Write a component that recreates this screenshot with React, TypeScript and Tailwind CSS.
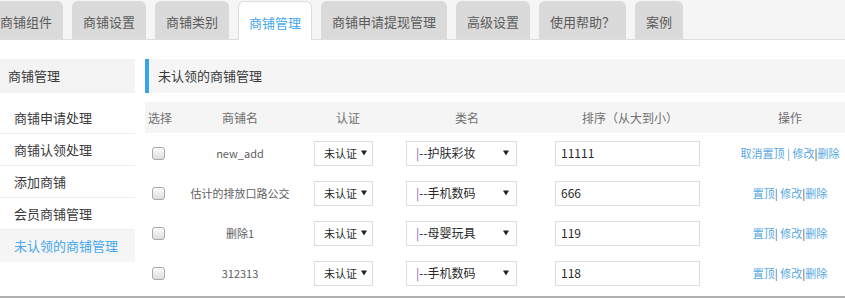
import React from "react";

const tabs = ["商铺组件", "商铺设置", "商铺类别", "商铺管理", "商铺申请提现管理", "高级设置", "使用帮助？", "案例"];
const menu = ["商铺申请处理", "商铺认领处理", "添加商铺", "会员商铺管理", "未认领的商铺管理"];

const rows = [
  { name: "new_add", cat: "护肤彩妆", sort: "11111", top: true },
  { name: "估计的排放口路公交", cat: "手机数码", sort: "666", top: false },
  { name: "删除1", cat: "母婴玩具", sort: "119", top: false },
  { name: "312313", cat: "手机数码", sort: "118", top: false },
];

function Checkbox() {
  return (
    <div className="ml-[7px] h-[13px] w-[13px] rounded-[3px] border border-[#a9a9a9] bg-gradient-to-b from-[#fcfcfc] to-[#dedede]" />
  );
}

function Arrow() {
  return (
    <svg width="6" height="6" viewBox="0 0 6 6" className="shrink-0">
      <path d="M0 0.5 H6 L3 5.5 Z" fill="#222" />
    </svg>
  );
}

function FakeSelect({ label, cls }: { label: React.ReactNode; cls: string }) {
  return (
    <div className={`flex h-[25px] items-center border border-[#dcdcdc] bg-white pl-[9px] text-[#2a2a2a] ${cls}`}>
      <span className="flex-1 whitespace-nowrap">{label}</span>
      <Arrow />
    </div>
  );
}

export default function App() {
  return (
    <div
      className="flex h-[298px] w-full flex-col overflow-hidden bg-white text-[#333]"
      style={{ fontFamily: '"Noto Sans CJK SC", "Noto Sans", sans-serif' }}
    >
      {/* tabs */}
      <div className="h-[40px] shrink-0 border-b border-[#dddddd] bg-[#f5f5f5]">
        <div className="ml-[-11px] flex h-full items-end gap-[9px]">
          {tabs.map((t) =>
            t === "商铺管理" ? (
              <div
                key={t}
                className="mb-[-1px] flex h-[39px] items-center rounded-t-[6px] border border-b-0 border-[#dddddd] bg-white px-[10px] pt-[3px] text-[13px] text-[#47a8ee]"
              >
                {t}
              </div>
            ) : (
              <div
                key={t}
                className="flex h-[38px] items-center rounded-t-[6px] border border-b-0 border-[#dadada] bg-[#dadada] px-[10px] pt-[3px] text-[13px] text-[#5a5a5a]"
              >
                {t}
              </div>
            )
          )}
        </div>
      </div>

      <div className="flex flex-1 gap-[10px] pt-[19px]">
        {/* sidebar */}
        <div className="w-[135px] shrink-0">
          <div className="flex h-[34px] items-center bg-[#f3f3f3] pl-[8px] text-[13px] text-[#3a3a3a]">商铺管理</div>
          <div className="mt-[9px]">
            {menu.map((m, i) =>
              i === menu.length - 1 ? (
                <div key={m} className="flex h-[32px] items-center bg-[#f5f5f5] pl-[14px] text-[13px] text-[#47a8ee]">
                  {m}
                </div>
              ) : (
                <div key={m} className="flex h-[32px] items-center border-b border-[#eeeeee] pl-[14px] text-[13px] text-[#3a3a3a]">
                  {m}
                </div>
              )
            )}
          </div>
        </div>

        {/* main */}
        <div className="flex-1">
          <div className="flex h-[34px] items-center border-l-4 border-[#35a6ee] bg-[#f5f5f5] pl-[9px] text-[13px] text-[#3a3a3a]">
            未认领的商铺管理
          </div>

          <div className="mt-[9px] grid grid-cols-[30px_130px_86px_152px_192px_110px]">
            <div className="col-span-6 grid h-[31px] grid-cols-subgrid items-center bg-[#f5f5f5] text-[12px] text-[#707070]">
              <div className="text-center">选择</div>
              <div className="text-center">商铺名</div>
              <div className="text-center">认证</div>
              <div className="text-center">类名</div>
              <div className="pr-[18px] text-center">排序（从大到小）</div>
              <div className="text-center">操作</div>
            </div>

            {rows.map((r) => (
              <div key={r.name} className="col-span-6 grid h-[40px] grid-cols-subgrid items-center">
                <Checkbox />
                <div className="text-center text-[11px] text-[#606060]">{r.name}</div>
                <div className="ml-[9px]">
                  <FakeSelect label="未认证" cls="w-[59px] pr-[5px] text-[11px]" />
                </div>
                <div className="ml-[15px]">
                  <FakeSelect
                    label={
                      <>
                        <span className="text-[#8a5fb0]">|</span>--{r.cat}
                      </>
                    }
                    cls="w-[111px] pr-[7px] text-[12px]"
                  />
                </div>
                <div className="ml-[12px]">
                  <div className="flex h-[25px] w-[145px] items-center border border-[#dcdcdc] pl-[5px] text-[12px] text-[#2a2a2a]">
                    {r.sort}
                  </div>
                </div>
                <div className="whitespace-nowrap text-center text-[11px] text-[#55a7e2]">
                  {r.top ? (
                    <>
                      取消置顶 | 修改<span className="text-[#444]">|</span>删除
                    </>
                  ) : (
                    <>
                      置顶<span className="text-[#2f6fb0]">|</span> 修改<span className="text-[#444]">|</span>删除
                    </>
                  )}
                </div>
              </div>
            ))}
          </div>
        </div>
      </div>

      <div className="h-[2px] shrink-0 bg-[#b0b0b0]" />
    </div>
  );
}
